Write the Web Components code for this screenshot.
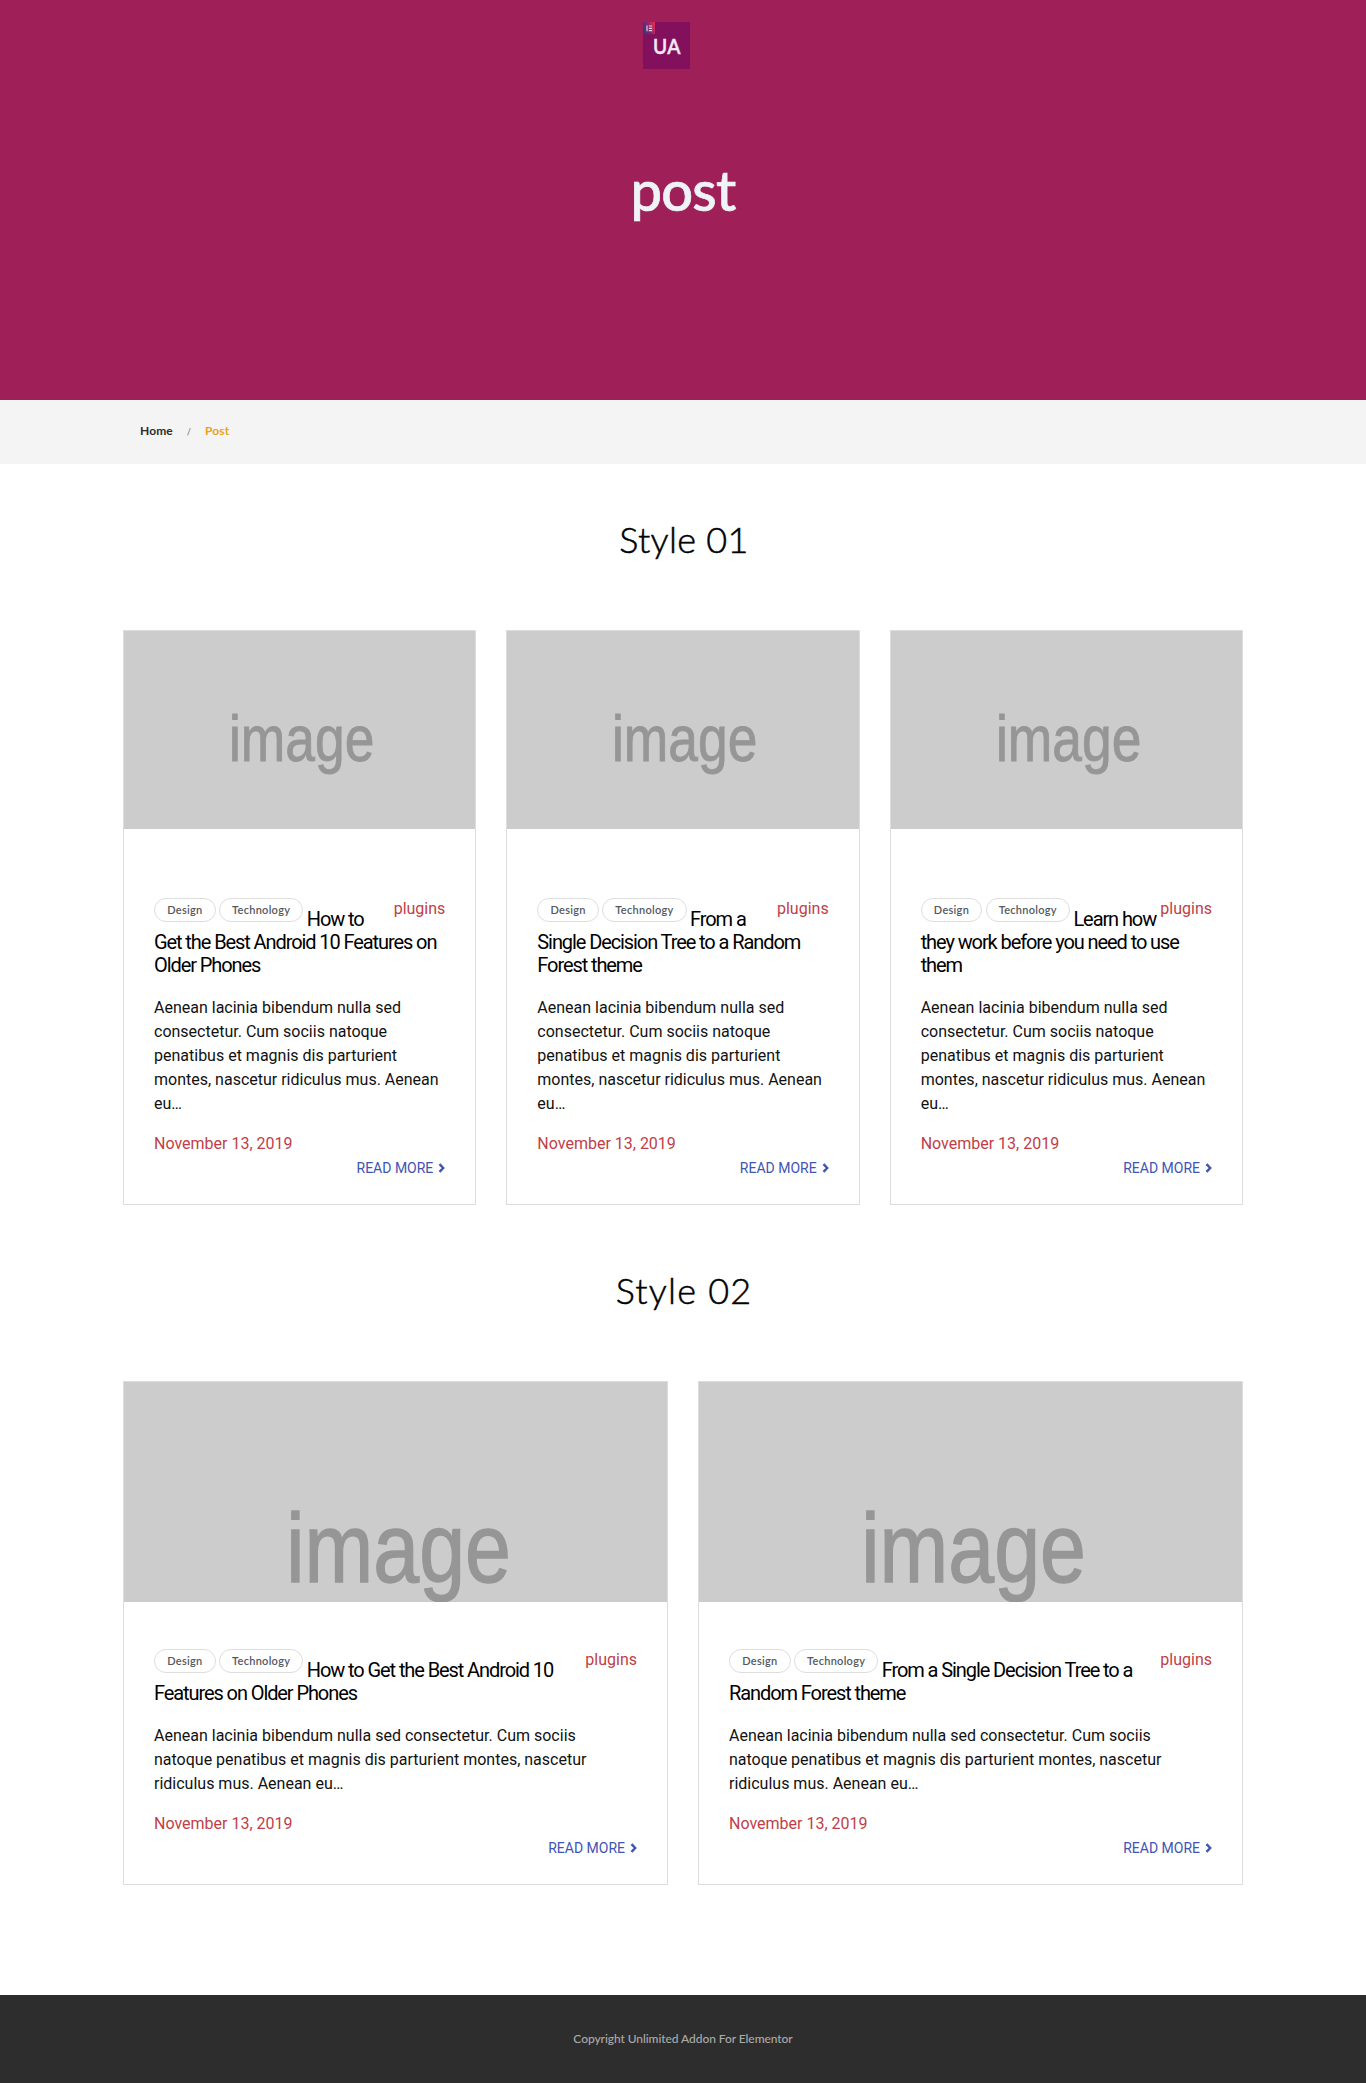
<!DOCTYPE html>
<html lang="en">
<head>
<meta charset="utf-8">
<title>post</title>
<style>
body{margin:0;background:#fff;color:#000;font-family:Roboto,sans-serif}
main{display:flex;flex-direction:column;gap:10px;width:1120px;margin:0 auto}
</style>
</head>
<body>
<page-hero>post</page-hero>
<bread-crumb><span>Home</span><span slot="current">Post</span></bread-crumb>
<main>
  <post-section heading="Style 01" columns="3">
    <post-card heading="How to Get the Best Android 10 Features on Older Phones"></post-card>
    <post-card heading="From a Single Decision Tree to a Random Forest theme"></post-card>
    <post-card heading="Learn how they work before you need to use them"></post-card>
  </post-section>
  <post-section heading="Style 02" columns="2" style="--track:1.2px">
    <post-card wide heading="How to Get the Best Android 10 Features on Older Phones"></post-card>
    <post-card wide heading="From a Single Decision Tree to a Random Forest theme"></post-card>
  </post-section>
</main>
<page-footer>Copyright Unlimited Addon For Elementor</page-footer>
<script>
const define = (name, html) => customElements.define(name, class extends HTMLElement {
  connectedCallback() {
    if (this.shadowRoot) return;
    this.attachShadow({mode: 'open'}).innerHTML = typeof html === 'function' ? html(this) : html;
  }
});

define('site-logo', `
<style>
:host{display:block;width:47px;height:47px}
svg{display:block}
text{font:600 20.5px Lato,sans-serif;font-kerning:none;fill:#f3e9f3;stroke:#f3e9f3;stroke-width:.4}
</style>
<svg width="47" height="47" viewBox="0 0 47 47">
  <defs><linearGradient id="g" x1="0" y1=".7" x2="1" y2=".3"><stop offset="0" stop-color="#2b3a85"/><stop offset=".5" stop-color="#84266f"/><stop offset="1" stop-color="#e52b50"/></linearGradient></defs>
  <rect width="47" height="47" fill="#82105c"/>
  <rect width="12" height="12" fill="url(#g)"/>
  <path d="M4 3.4v5.8M5.8 4h3.4M5.8 6.3h3.4M5.8 8.6h3.4" stroke="#e6cfe2" stroke-width="1.2"/>
  <text x="10" y="32" textLength="27.4" lengthAdjust="spacingAndGlyphs">UA</text>
</svg>`);

define('page-hero', `
<style>
:host{display:flex;flex-direction:column;align-items:center;box-sizing:border-box;height:400px;padding-top:22px;background:#9f2058}
site-logo{margin-right:33px}
h1{margin:89px 0 0;font:500 56px/64px Lato,sans-serif;letter-spacing:-.8px;color:#eff3f8;-webkit-text-stroke:.7px #eff3f8}
</style>
<site-logo></site-logo><h1><slot></slot></h1>`);

define('bread-crumb', `
<style>
:host{display:flex;align-items:center;height:64px;box-sizing:border-box;padding:0 0 2px 140px;background:#f4f4f4;font:700 12px/16px Lato,sans-serif;letter-spacing:.1px;color:#2d2d2d}
i{font:700 9px/16px Lato,sans-serif;color:#888;margin:2px 14px 0}
.c{color:#eba21c}
</style>
<slot></slot><i>/</i><span class="c"><slot name="current"></slot></span>`);

define('placeholder-image', `
<style>
:host{display:block;background:#ccc;overflow:hidden}
svg{display:block;width:100%;height:100%}
text{font:64px "Liberation Sans",sans-serif;fill:#969696;stroke:#969696;stroke-width:.9}
</style>
<svg viewBox="0 0 351.33 198" preserveAspectRatio="xMidYMin slice"><text x="105" y="129.7" textLength="145.3" lengthAdjust="spacingAndGlyphs">image</text></svg>`);

define('tag-pill', `
<style>
:host{display:inline-block;box-sizing:border-box;height:24px;padding:0 12.2px;border:1px solid #ddd;border-radius:12px;font:600 11px/22px Lato,sans-serif;letter-spacing:.28px;color:#54595f;vertical-align:12px}
</style><slot></slot>`);

define('read-more', `
<style>
:host{display:flex;justify-content:flex-end;align-items:center;gap:5px;font:14px/24px Roboto,sans-serif;color:#4054b2}
svg{display:block}
</style><slot></slot><svg width="7" height="10" viewBox="0 0 7 10"><path d="M1.5 1.2 5.2 5 1.5 8.8" fill="none" stroke="currentColor" stroke-width="2.4"/></svg>`);

define('post-card', el => `
<style>
:host{display:block;box-sizing:border-box;height:575px;border:1px solid #ddd;background:#fff}
placeholder-image{height:198px}
.body{padding:69px 30px 0}
:host([wide]){height:504px}
:host([wide]) placeholder-image{height:220px}
:host([wide]) .body{padding-top:47px}
.cat{float:right;font-size:16px;line-height:24px;color:#c03e47;margin-top:-1px}
h3{margin:0;font:400 20px/23px Roboto,sans-serif;letter-spacing:-1.09px;color:#000}
tag-pill + tag-pill{margin:0 -.5px 0 -.7px}
p{margin:19px 0 0;font-size:16px;line-height:24px;color:#111}
.date{margin-top:16px;color:#c03e47}
</style>
<placeholder-image></placeholder-image>
<div class="body">
  <span class="cat">plugins</span>
  <h3><tag-pill>Design</tag-pill> <tag-pill>Technology</tag-pill> ${el.getAttribute('heading')}</h3>
  <p>Aenean lacinia bibendum nulla sed consectetur. Cum sociis natoque penatibus et magnis dis parturient montes, nascetur ridiculus mus. Aenean eu…</p>
  <p class="date">November 13, 2019</p>
  <read-more>READ MORE</read-more>
</div>`);

define('post-section', el => `
<style>
:host{display:block}
h2{margin:0;padding:53px 0 69px 2px;font:300 36px/44px Lato,sans-serif;letter-spacing:var(--track,.3px);-webkit-text-stroke:.5px #000;text-align:center}
.grid{display:grid;grid-template-columns:repeat(${el.getAttribute('columns')},1fr);gap:30px}
</style>
<h2>${el.getAttribute('heading')}</h2><div class="grid"><slot></slot></div>`);

define('page-footer', `
<style>
:host{display:flex;justify-content:center;align-items:center;height:88px;margin-top:110px;background:#2d2d2d;color:#aaa;font:500 12px/18px Lato,sans-serif;letter-spacing:-.07px}
</style><span><slot></slot></span>`);
</script>
</body>
</html>
